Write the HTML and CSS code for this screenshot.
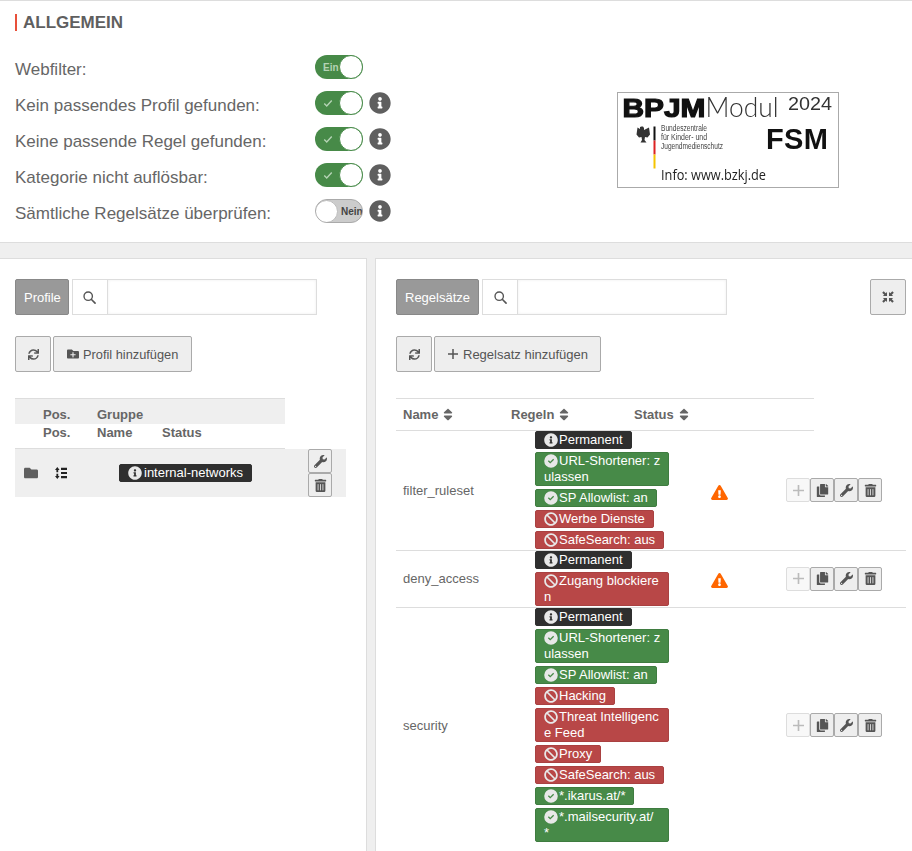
FILE: index.html
```html
<!DOCTYPE html>
<html lang="de">
<head>
<meta charset="utf-8">
<title>Webfilter</title>
<link rel="stylesheet" href="styles.css">
</head>
<body>
<svg class="defs" aria-hidden="true">
  <symbol id="i-info" viewBox="0 0 512 512"><path d="M256 8C119.043 8 8 119.083 8 256c0 136.997 111.043 248 248 248s248-111.003 248-248C504 119.083 392.957 8 256 8zm0 110c23.196 0 42 18.804 42 42s-18.804 42-42 42-42-18.804-42-42 18.804-42 42-42zm56 254c0 6.627-5.373 12-12 12h-88c-6.627 0-12-5.373-12-12v-24c0-6.627 5.373-12 12-12h12v-64h-12c-6.627 0-12-5.373-12-12v-24c0-6.627 5.373-12 12-12h64c6.627 0 12 5.373 12 12v100h12c6.627 0 12 5.373 12 12v24z"/></symbol>
  <symbol id="i-check" viewBox="0 0 512 512"><path fill-rule="evenodd" d="M256 8a248 248 0 1 0 0 496a248 248 0 1 0 0-496zM142 262l34-34 52 52 108-108 34 34-142 142z"/></symbol>
  <symbol id="i-ban" viewBox="0 0 512 512"><path d="M256 8C119.034 8 8 119.033 8 256s111.034 248 248 248 248-111.034 248-248S392.967 8 256 8zm130.108 117.892c65.448 65.448 70 165.481 20.677 235.637L150.47 105.216c70.204-49.356 170.226-44.735 235.638 20.676zM125.892 386.108c-65.448-65.448-70-165.481-20.677-235.637L361.53 406.784c-70.203 49.356-170.226 44.736-235.638-20.676z"/></symbol>
  <symbol id="i-wrench" viewBox="0 0 512 512"><path d="M507.73 109.1c-2.24-9.03-13.54-12.09-20.12-5.51l-74.36 74.36-67.88-11.31-11.31-67.88 74.36-74.36c6.62-6.62 3.43-17.9-5.66-20.16-47.38-11.74-99.55.91-136.58 37.93-39.64 39.64-50.55 97.1-34.05 147.2L18.74 402.76c-24.99 24.99-24.99 65.51 0 90.5 24.99 24.99 65.51 24.99 90.5 0l213.21-213.21c50.12 16.71 107.47 5.68 147.37-34.22 37.07-37.07 49.7-89.32 37.91-136.73zM64 472c-13.25 0-24-10.75-24-24 0-13.26 10.75-24 24-24s24 10.74 24 24c0 13.25-10.75 24-24 24z"/></symbol>
  <symbol id="i-trash" viewBox="0 0 448 512"><path d="M32 464a48 48 0 0 0 48 48h288a48 48 0 0 0 48-48V128H32zm272-256a16 16 0 0 1 32 0v224a16 16 0 0 1-32 0zm-96 0a16 16 0 0 1 32 0v224a16 16 0 0 1-32 0zm-96 0a16 16 0 0 1 32 0v224a16 16 0 0 1-32 0zM432 32H312l-9.4-18.7A24 24 0 0 0 281.1 0H166.8a23.72 23.72 0 0 0-21.4 13.3L136 32H16A16 16 0 0 0 0 48v32a16 16 0 0 0 16 16h416a16 16 0 0 0 16-16V48a16 16 0 0 0-16-16z"/></symbol>
  <symbol id="i-sync" viewBox="0 0 512 512"><path d="M440.65 12.57l4 82.77A247.16 247.16 0 0 0 255.83 8C134.73 8 33.91 94.92 12.29 209.82A12 12 0 0 0 24.09 224h49.05a12 12 0 0 0 11.67-9.26 175.91 175.91 0 0 1 317-56.94l-101.46-4.86a12 12 0 0 0-12.57 12v47.41a12 12 0 0 0 12 12H500a12 12 0 0 0 12-12V12a12 12 0 0 0-12-12h-47.37a12 12 0 0 0-11.98 12.57zM255.83 432a175.61 175.61 0 0 1-146-77.8l101.8 4.87a12 12 0 0 0 12.57-12v-47.4a12 12 0 0 0-12-12H12a12 12 0 0 0-12 12V500a12 12 0 0 0 12 12h47.35a12 12 0 0 0 12-12.6l-4.15-82.57A247.17 247.17 0 0 0 255.83 504c121.11 0 221.93-86.92 243.55-201.82a12 12 0 0 0-11.8-14.18h-49.05a12 12 0 0 0-11.67 9.26A175.86 175.86 0 0 1 255.83 432z"/></symbol>
  <symbol id="i-search" viewBox="0 0 512 512"><circle cx="205" cy="205" r="165" fill="none" stroke="currentColor" stroke-width="54"/><path d="M325 325l150 150" fill="none" stroke="currentColor" stroke-width="64" stroke-linecap="round"/></symbol>
  <symbol id="i-folder" viewBox="0 0 512 512"><path d="M464 128H272l-64-64H48C21.49 64 0 85.49 0 112v288c0 26.51 21.49 48 48 48h416c26.51 0 48-21.49 48-48V176c0-26.51-21.49-48-48-48z"/></symbol>
  <symbol id="i-folder-plus" viewBox="0 0 512 512"><path d="M464 128H272l-64-64H48C21.49 64 0 85.49 0 112v288c0 26.51 21.49 48 48 48h416c26.51 0 48-21.49 48-48V176c0-26.51-21.49-48-48-48zm-96 168c0 8.84-7.16 16-16 16h-72v72c0 8.84-7.16 16-16 16h-16c-8.84 0-16-7.16-16-16v-72h-72c-8.84 0-16-7.16-16-16v-16c0-8.84 7.16-16 16-16h72v-72c0-8.84 7.16-16 16-16h16c8.84 0 16 7.16 16 16v72h72c8.84 0 16 7.16 16 16z"/></symbol>
  <symbol id="i-plus" viewBox="0 0 10 10"><path d="M5 0v10M0 5h10" fill="none" stroke="currentColor" stroke-width="1.500"/></symbol>
  <symbol id="i-copy" viewBox="0 0 448 512"><path d="M320 448v40c0 13.255-10.745 24-24 24H24c-13.255 0-24-10.745-24-24V120c0-13.255 10.745-24 24-24h72v296c0 30.879 25.121 56 56 56h168zm0-344V0H152c-13.255 0-24 10.745-24 24v368c0 13.255 10.745 24 24 24h272c13.255 0 24-10.745 24-24V128H344c-13.2 0-24-10.8-24-24zm120.971-31.029L375.029 7.029A24 24 0 0 0 358.059 0H352v96h96v-6.059a24 24 0 0 0-7.029-16.97z"/></symbol>
  <symbol id="i-warn" viewBox="0 0 576 512"><path d="M569.517 440.013C587.975 472.007 564.806 512 527.94 512H48.054c-36.937 0-59.999-40.055-41.577-71.987L246.423 24.035c18.467-32.009 64.72-31.951 83.154 0l239.94 416.015zM288 354c-25.405 0-46 20.595-46 46s20.595 46 46 46 46-20.595 46-46-20.595-46-46-46zm-43.673-165.346l7.418 136c.347 6.364 5.609 11.346 11.982 11.346h48.546c6.373 0 11.635-4.982 11.982-11.346l7.418-136c.375-6.874-5.098-12.654-11.982-12.654h-63.383c-6.884 0-12.356 5.78-11.981 12.654z"/></symbol>
  <symbol id="i-sort" viewBox="0 0 320 512"><path d="M41 288h238c21.4 0 32.1 25.9 17 41L177 448c-9.4 9.4-24.6 9.4-33.9 0L24 329c-15.1-15.1-4.4-41 17-41zm255-105L177 64c-9.4-9.4-24.6-9.4-33.9 0L24 183c-15.1 15.1-4.4 41 17 41h238c21.4 0 32.1-25.9 17-41z"/></symbol>
  <symbol id="i-order" viewBox="0 0 12 12"><path d="M0 3L2.300 0l2.300 3H3.200v2.200H1.400V3zM0 9l2.300 3 2.300-3H3.200V6.800H1.400V9zM6 .8h6v2.200H6zM6 4.900h6v2.200H6zM6 9h6v2.200H6z"/></symbol>
  <symbol id="i-compress" viewBox="0 0 12 12"><path d="M.2 1.700L1.700.2l2 2L5 .9V5H.9l1.300-1.300zM11.800 1.700L10.300.2l-2 2L7 .9V5h4.100L9.800 3.700zM.2 10.300l1.500 1.500 2-2L5 11.100V7H.9l1.300 1.300zM11.800 10.300l-1.500 1.500-2-2L7 11.100V7h4.100L9.800 8.300z"/></symbol>
  <symbol id="i-tick" viewBox="0 0 12 12"><path d="M1.500 6.500l3 3 6-6.500" fill="none" stroke="currentColor" stroke-width="1.700"/></symbol>
</svg>

<section class="general">
  <div class="general-form">
    <h2 class="section-title">ALLGEMEIN</h2>
    <div class="form-row">
      <span class="form-label">Webfilter:</span>
      <span class="toggle on"><span class="toggle-text">Ein</span><span class="knob"></span></span>
    </div>
    <div class="form-row">
      <span class="form-label">Kein passendes Profil gefunden:</span>
      <span class="toggle on"><svg class="toggle-tick"><use href="#i-tick"/></svg><span class="knob"></span></span>
      <svg class="info-icon"><use href="#i-info"/></svg>
    </div>
    <div class="form-row">
      <span class="form-label">Keine passende Regel gefunden:</span>
      <span class="toggle on"><svg class="toggle-tick"><use href="#i-tick"/></svg><span class="knob"></span></span>
      <svg class="info-icon"><use href="#i-info"/></svg>
    </div>
    <div class="form-row">
      <span class="form-label">Kategorie nicht auflösbar:</span>
      <span class="toggle on"><svg class="toggle-tick"><use href="#i-tick"/></svg><span class="knob"></span></span>
      <svg class="info-icon"><use href="#i-info"/></svg>
    </div>
    <div class="form-row">
      <span class="form-label">Sämtliche Regelsätze überprüfen:</span>
      <span class="toggle off"><span class="knob"></span><span class="toggle-text">Nein</span></span>
      <svg class="info-icon"><use href="#i-info"/></svg>
    </div>
  </div>
  <svg class="logo" viewBox="0 0 222 96" role="img" aria-label="BPJM Modul 2024">
    <rect x="0.500" y="0.500" width="221" height="95" fill="#fff" stroke="#aaa"/>
    <text x="5.500" y="25" class="logo-bpjm" textLength="83" lengthAdjust="spacingAndGlyphs">BPJM</text>
    <text x="88.500" y="25" class="logo-modul" textLength="73" lengthAdjust="spacingAndGlyphs">Modul</text>
    <text x="171" y="18" class="logo-year" textLength="44" lengthAdjust="spacingAndGlyphs">2024</text>
    <path d="M24.500 34.500h1.500l1 1.500v2l5-2.500 1 7-2.500 3-2.500-.5-.5 3 2 2.500h-6l1.500-2.500-.5-3-2.500.5-2.500-3 1-7 2.500 1.500v-2z" fill="#333"/>
    <rect x="36.500" y="34.500" width="2" height="14" fill="#111"/>
    <rect x="36.500" y="48.500" width="2" height="14" fill="#d22"/>
    <rect x="36.500" y="62.500" width="2" height="14" fill="#f5c400"/>
    <text x="44" y="39" class="logo-small" textLength="46" lengthAdjust="spacingAndGlyphs">Bundeszentrale</text>
    <text x="44" y="48" class="logo-small" textLength="46" lengthAdjust="spacingAndGlyphs">für Kinder- und</text>
    <text x="44" y="56.500" class="logo-small" textLength="62" lengthAdjust="spacingAndGlyphs">Jugendmedienschutz</text>
    <text x="149" y="57" class="logo-fsm" textLength="62" lengthAdjust="spacing">FSM</text>
    <text x="44" y="88" class="logo-info" textLength="105" lengthAdjust="spacingAndGlyphs">Info: www.bzkj.de</text>
  </svg>
</section>

<div class="panels">
  <main class="panel panel-left">
    <div class="toolbar">
      <span class="pill">Profile</span>
      <span class="search-addon"><svg class="ic-13"><use href="#i-search"/></svg></span>
      <span class="search-input"></span>
    </div>
    <div class="actions">
      <button class="btn btn-icon"><svg class="ic-11"><use href="#i-sync"/></svg></button>
      <button class="btn"><svg class="ic-12"><use href="#i-folder-plus"/></svg>Profil hinzufügen</button>
    </div>
    <div class="profile-head">
      <div class="head-row shaded"><span class="col-pos">Pos.</span><span>Gruppe</span></div>
      <div class="head-row second"><span class="col-pos">Pos.</span><span class="col-name">Name</span><span>Status</span></div>
    </div>
    <div class="profile-row">
      <svg class="ic-folder"><use href="#i-folder"/></svg>
      <svg class="ic-order"><use href="#i-order"/></svg>
      <span class="badge dark profile-badge"><svg class="badge-icon"><use href="#i-info"/></svg>internal-networks</span>
      <div class="stack-btns">
        <button class="mini"><svg class="ic-13"><use href="#i-wrench"/></svg></button>
        <button class="mini"><svg class="ic-13"><use href="#i-trash"/></svg></button>
      </div>
    </div>
  </main>

  <main class="panel panel-right">
    <div class="toolbar">
      <span class="pill">Regelsätze</span>
      <span class="search-addon"><svg class="ic-13"><use href="#i-search"/></svg></span>
      <span class="search-input"></span>
      <button class="btn btn-icon push-right"><svg class="ic-12"><use href="#i-compress"/></svg></button>
    </div>
    <div class="actions">
      <button class="btn btn-icon"><svg class="ic-11"><use href="#i-sync"/></svg></button>
      <button class="btn"><svg class="ic-10"><use href="#i-plus"/></svg>Regelsatz hinzufügen</button>
    </div>
    <div class="rules-head">
      <span class="rh-name">Name<svg class="ic-sort"><use href="#i-sort"/></svg></span>
      <span class="rh-rules">Regeln<svg class="ic-sort"><use href="#i-sort"/></svg></span>
      <span>Status<svg class="ic-sort"><use href="#i-sort"/></svg></span>
    </div>

    <div class="rule-row">
      <span class="rule-name">filter_ruleset</span>
      <div class="badges">
        <span class="badge dark"><svg class="badge-icon"><use href="#i-info"/></svg>Permanent</span>
        <span class="badge green wide"><svg class="badge-icon"><use href="#i-check"/></svg>URL-Shortener: z<br>ulassen</span>
        <span class="badge green"><svg class="badge-icon"><use href="#i-check"/></svg>SP Allowlist: an</span>
        <span class="badge red"><svg class="badge-icon"><use href="#i-ban"/></svg>Werbe Dienste</span>
        <span class="badge red"><svg class="badge-icon"><use href="#i-ban"/></svg>SafeSearch: aus</span>
      </div>
      <div class="rule-status"><svg class="ic-warn"><use href="#i-warn"/></svg></div>
      <div class="group-btns">
        <button class="mini disabled"><svg class="ic-11"><use href="#i-plus"/></svg></button>
        <button class="mini"><svg class="ic-13"><use href="#i-copy"/></svg></button>
        <button class="mini"><svg class="ic-13"><use href="#i-wrench"/></svg></button>
        <button class="mini"><svg class="ic-13"><use href="#i-trash"/></svg></button>
      </div>
    </div>

    <div class="rule-row">
      <span class="rule-name">deny_access</span>
      <div class="badges">
        <span class="badge dark"><svg class="badge-icon"><use href="#i-info"/></svg>Permanent</span>
        <span class="badge red wide"><svg class="badge-icon"><use href="#i-ban"/></svg>Zugang blockiere<br>n</span>
      </div>
      <div class="rule-status"><svg class="ic-warn"><use href="#i-warn"/></svg></div>
      <div class="group-btns">
        <button class="mini disabled"><svg class="ic-11"><use href="#i-plus"/></svg></button>
        <button class="mini"><svg class="ic-13"><use href="#i-copy"/></svg></button>
        <button class="mini"><svg class="ic-13"><use href="#i-wrench"/></svg></button>
        <button class="mini"><svg class="ic-13"><use href="#i-trash"/></svg></button>
      </div>
    </div>

    <div class="rule-row">
      <span class="rule-name">security</span>
      <div class="badges">
        <span class="badge dark"><svg class="badge-icon"><use href="#i-info"/></svg>Permanent</span>
        <span class="badge green wide"><svg class="badge-icon"><use href="#i-check"/></svg>URL-Shortener: z<br>ulassen</span>
        <span class="badge green"><svg class="badge-icon"><use href="#i-check"/></svg>SP Allowlist: an</span>
        <span class="badge red"><svg class="badge-icon"><use href="#i-ban"/></svg>Hacking</span>
        <span class="badge red wide"><svg class="badge-icon"><use href="#i-ban"/></svg>Threat Intelligenc<br>e Feed</span>
        <span class="badge red"><svg class="badge-icon"><use href="#i-ban"/></svg>Proxy</span>
        <span class="badge red"><svg class="badge-icon"><use href="#i-ban"/></svg>SafeSearch: aus</span>
        <span class="badge green"><svg class="badge-icon"><use href="#i-check"/></svg>*.ikarus.at/*</span>
        <span class="badge green wide"><svg class="badge-icon"><use href="#i-check"/></svg>*.mailsecurity.at/<br>*</span>
      </div>
      <div class="rule-status"></div>
      <div class="group-btns">
        <button class="mini disabled"><svg class="ic-11"><use href="#i-plus"/></svg></button>
        <button class="mini"><svg class="ic-13"><use href="#i-copy"/></svg></button>
        <button class="mini"><svg class="ic-13"><use href="#i-wrench"/></svg></button>
        <button class="mini"><svg class="ic-13"><use href="#i-trash"/></svg></button>
      </div>
    </div>
  </main>
</div>
</body>
</html>
```
FILE: styles.css
```css
* { box-sizing: border-box; }
html, body { height: 100%; }
body {
  margin: 0;
  height: 851px;
  overflow: hidden;
  display: flex;
  flex-direction: column;
  background: #efefef;
  color: #666;
  font-family: "Liberation Sans", Arial, sans-serif;
  font-size: 13px;
}
.defs { position: absolute; width: 0; height: 0; }
svg { fill: currentColor; display: block; }
button { font-family: inherit; }

.general {
  height: 243px;
  flex: none;
  background: #fff;
  border-top: 1px solid #ddd;
  border-bottom: 1px solid #ddd;
  display: flex;
  padding: 13px 0 0 15px;
}
.general-form { width: 602px; }
.section-title {
  margin: 0 0 24px;
  height: 17px;
  border-left: 2px solid #e8503a;
  padding-left: 6px;
  font-size: 17px;
  line-height: 17px;
  font-weight: bold;
  color: #5f5f5f;
}
.form-row {
  display: flex;
  align-items: flex-start;
  height: 36px;
}
.form-label { width: 300px; font-size: 17px; line-height: 30px; color: #666; }
.toggle {
  position: relative;
  width: 48px;
  height: 24px;
  border-radius: 12px;
  display: flex;
  align-items: center;
  overflow: hidden;
  flex: none;
}
.toggle.on { background: #478a48; justify-content: space-between; padding-left: 8px; }
.toggle.off { background: #ccc; border: 1px solid #aaa; }
.knob {
  width: 24px;
  height: 24px;
  border-radius: 50%;
  background: #fff;
  flex: none;
}
.toggle.on .knob { border: 1px solid #478a48; }
.toggle.off .knob { width: 23px; height: 23px; margin-left: -1px; border: 1px solid #bbb; }
.toggle-text { font-size: 10px; font-weight: bold; color: #b5d3b5; white-space: nowrap; }
.toggle.off .toggle-text { color: #444; margin-left: 3px; }
.toggle-tick { width: 10px; height: 10px; color: #b5d3b5; }
.info-icon { width: 22px; height: 22px; margin: 1px 0 0 6px; color: #5f5f5f; }

.logo { width: 222px; height: 96px; margin-top: 78px; flex: none; filter: blur(0.3px); }
.logo-bpjm { font: 900 26px "Liberation Sans", sans-serif; fill: #111; stroke: #111; stroke-width: 1.200; }
.logo-modul { font: 300 27px Lato, sans-serif; fill: #333; }
.logo-year { font: 19px "Liberation Sans", sans-serif; fill: #333; }
.logo-small { font: 8.500px "Liberation Sans", sans-serif; fill: #444; }
.logo-fsm { font: bold 29px "Liberation Sans", sans-serif; fill: #111; }
.logo-info { font: 14px "Open Sans", sans-serif; fill: #222; }

.panels {
  flex: 1;
  display: flex;
  gap: 8px;
  padding-top: 15px;
  min-height: 0;
}
.panel { background: #fff; min-height: 0; border-top: 1px solid #ddd; }
.panel-left { width: 367px; flex: none; padding: 20px 0 0 15px; border-right: 1px solid #ddd; }
.panel-right { flex: 1; padding: 20px 6px 0 20px; border-left: 1px solid #ddd; }

.toolbar { display: flex; height: 36px; }
.pill {
  height: 36px;
  padding: 0 8px;
  display: flex;
  align-items: center;
  background: #999;
  border: 1px solid #888;
  border-radius: 2px;
  color: #fff;
  font-size: 13px;
}
.panel-left .pill { padding-right: 7px; }
.search-addon {
  width: 36px;
  margin-left: 3px;
  border: 1px solid #ddd;
  display: flex;
  align-items: center;
  justify-content: center;
  color: #555;
}
.search-input {
  width: 209px;
  border: 1px solid #ddd;
  border-left: 0;
  box-shadow: inset 0 0 3px #eee;
}
.push-right { margin-left: auto; }
.actions { display: flex; gap: 2px; margin-top: 21px; height: 36px; }
.btn {
  height: 36px;
  padding: 0 13px;
  display: flex;
  align-items: center;
  gap: 4px;
  background: #eee;
  border: 1px solid #aaa;
  border-radius: 2px;
  color: #555;
  font-size: 12.800px;
}
.panel-right .btn { font-size: 13px; gap: 5px; padding-right: 12px; }
.panel-right .btn-icon { padding: 0; }
.btn-icon { width: 36px; padding: 0; justify-content: center; }

.ic-10 { width: 10px; height: 10px; }
.ic-11 { width: 11px; height: 11px; }
.ic-12 { width: 12px; height: 12px; }
.ic-13 { width: 13px; height: 13px; }
.ic-sort { width: 10px; height: 15px; color: #666; margin-left: 5px; }
.ic-warn { width: 17px; height: 15px; color: #f60; margin-top: 4px; }
.ic-folder { width: 14px; height: 14px; color: #5f5f5f; }
.ic-order { width: 12px; height: 12px; color: #222; margin-left: 17px; }

.profile-head { margin-top: 26px; width: 270px; border-top: 1px solid #ddd; border-bottom: 1px solid #ddd; height: 51px; font-weight: bold; font-size: 13px; color: #666; }
.head-row { display: flex; height: 25px; padding-left: 28px; line-height: 15px; }
.head-row.shaded { background: #efefef; padding-top: 8px; }
.head-row.second { padding-top: 1px; }
.col-pos { width: 54px; }
.col-name { width: 65px; }
.profile-row {
  width: 331px;
  height: 48px;
  background: #efefef;
  display: flex;
  align-items: center;
  padding-left: 9px;
}
.profile-badge { margin-left: 52px; }
.profile-badge .badge-icon { margin-right: 2px; }
.stack-btns { margin-left: auto; margin-right: 14px; display: flex; flex-direction: column; }

.badge {
  display: block;
  max-width: 134px;
  padding: 0 8px;
  border: 1px solid;
  border-radius: 2px;
  color: #fff;
  font-size: 13px;
  line-height: 16px;
  white-space: nowrap;
}
.badge.wide { width: 134px; }
.badge-icon { display: inline-block; width: 14px; height: 14px; margin-right: 1px; vertical-align: -3px; color: #e8e8e8; }
.dark { background: #2f2f2f; border-color: #2f2f2f; }
.green { background: #478a48; border-color: #3f7c40; }
.red { background: #b84747; border-color: #a94141; }

.rules-head {
  margin-top: 26px;
  width: 418px;
  height: 33px;
  border-top: 1px solid #ddd;
  border-bottom: 1px solid #ddd;
  display: flex;
  align-items: center;
  padding-left: 7px;
  font-weight: bold;
  font-size: 13px;
  color: #666;
}
.rules-head span { display: flex; align-items: center; }
.rh-name { width: 108px; }
.rh-rules { width: 123px; }

.rule-row {
  display: flex;
  align-items: center;
  padding: 0 0 1px;
  border-bottom: 1px solid #ddd;
}
.rule-row:last-child { border-bottom: 0; }
.rule-name { width: 139px; padding-left: 7px; flex: none; }
.badges { width: 134px; flex: none; display: flex; flex-direction: column; align-items: flex-start; gap: 3px; }
.rule-status { width: 100px; padding-left: 42px; flex: none; }
.group-btns { margin-left: 17px; display: flex; }
.mini {
  width: 24px;
  height: 24px;
  padding: 0;
  display: flex;
  align-items: center;
  justify-content: center;
  background: #eee;
  border: 1px solid #aaa;
  border-radius: 2px;
  color: #555;
}
.mini.disabled { background: #f8f8f8; border-color: #ddd; color: #bbb; }
```
